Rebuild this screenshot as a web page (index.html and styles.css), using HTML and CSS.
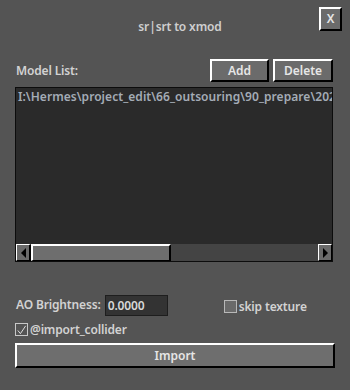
FILE: index.html
```html
<!DOCTYPE html>
<html>
<head>
<meta charset="utf-8">
<link rel="stylesheet" href="styles.css">
</head>
<body>
<div class="app">
  <div class="header">
    <span></span>
    <div class="title">sr|srt to xmod</div>
    <button class="bevel close">X</button>
  </div>
  <div class="toolbar">
    <div class="label">Model List:</div>
    <div class="actions">
      <button class="bevel btn add">Add</button>
      <button class="bevel btn del">Delete</button>
    </div>
  </div>
  <div class="list">
    <div class="items">
      <div class="item">I:\Hermes\project_edit\66_outsouring\90_prepare\2023\model</div>
    </div>
    <div class="hscroll">
      <div class="sbtn left"><span class="tri-l"></span></div>
      <div class="track">
        <div class="thumb"></div>
      </div>
      <div class="sbtn right"><span class="tri-r"></span></div>
    </div>
  </div>
  <div class="opts">
    <div class="ao">
      <span class="label">AO Brightness:</span>
      <div class="input">0.0000</div>
    </div>
    <div class="check skip"><span class="box"></span><span class="label">skip texture</span></div>
  </div>
  <div class="check collider">
    <span class="box checked"><svg width="12" height="12" viewBox="0 0 12 12"><path d="M2 6.5 L4.8 10 L10.5 1.5" fill="none" stroke="#e8e8e8" stroke-width="1"/></svg></span>
    <span class="label">@import_collider</span>
  </div>
  <button class="bevel import">Import</button>
</div>
</body>
</html>
```
FILE: styles.css
```css
* { box-sizing: border-box; }
html, body { margin: 0; padding: 0; }
body {
  width: 350px;
  height: 390px;
  background: #545454;
  font-family: "Noto Sans", "Open Sans", sans-serif;
  font-size: 12px;
  font-weight: 600;
  letter-spacing: -0.15px;
  color: #d2d2d2;
  overflow: hidden;
}
.app {
  display: flex;
  flex-direction: column;
  padding: 7px 17px 0 15px;
}
.header {
  display: grid;
  grid-template-columns: 1fr auto 1fr;
  margin-right: -9px;
  height: 24px;
}
.title {
  margin-top: 12px;
  line-height: 16px;
  color: #cfcfcf;
  padding-left: 3px;
}
button {
  font-family: inherit;
  font-weight: 600;
  font-size: 12px;
  color: #e6e6e6;
  padding: 0;
  margin: 0;
}
.bevel {
  background: #6b6b6b;
  border-style: solid;
  border-width: 2px;
  border-color: #ffffff #000000 #000000 #ffffff;
}
.close {
  justify-self: end;
  width: 23px;
  height: 24px;
  line-height: 18px;
}
.toolbar {
  display: flex;
  justify-content: space-between;
  align-items: center;
  margin-top: 28px;
  height: 23px;
}
.toolbar .label { padding-left: 1px; }
.actions { display: flex; gap: 4px; }
.btn { height: 23px; }
.add { width: 59px; }
.del { width: 60px; }
.list {
  margin-top: 5px;
  height: 175px;
  background: #2a2a2a;
  border: 1px solid #0c0c0c;
  display: flex;
  flex-direction: column;
  overflow: hidden;
}
.items { flex: 1; padding: 1px 0 0 2px; overflow: hidden; }
.item {
  white-space: nowrap;
  color: #a4acb6;
  line-height: 16px;
  letter-spacing: 0.05px;
}
.hscroll {
  height: 17px;
  display: flex;
  background: #444;
}
.sbtn {
  width: 15px;
  background: #6a6a6a;
  display: flex;
  align-items: center;
  justify-content: center;
  border-style: solid;
  border-width: 1px 2px 1px 1px;
  border-color: #fff #000 #000 #fff;
}
.sbtn.right { width: 14px; border-width: 1px 1px 1px 1px; }
.tri-l {
  width: 0; height: 0;
  border-top: 5px solid transparent;
  border-bottom: 5px solid transparent;
  border-right: 5px solid #000;
}
.tri-r {
  width: 0; height: 0;
  border-top: 5px solid transparent;
  border-bottom: 5px solid transparent;
  border-left: 5px solid #000;
}
.track { flex: 1; display: flex; }
.thumb {
  width: 140px;
  background: #6e6e6e;
  border-style: solid;
  border-width: 2px 2px 1px 2px;
  border-color: #fff #000 #000 #fff;
}
.opts {
  margin-top: 33px;
  display: flex;
  align-items: center;
  height: 21px;
}
.ao { display: flex; align-items: center; gap: 4px; }
.ao .label { padding-left: 1px; margin-top: -2px; }
.input {
  width: 63px;
  height: 21px;
  background: #333;
  border: 1px solid #1e1e1e;
  line-height: 19px;
  padding-left: 2px;
  color: #d8d8d8;
}
.check { display: flex; align-items: center; gap: 2px; }
.skip { margin-left: 56px; margin-top: 2px; }
.box {
  width: 13px;
  height: 13px;
  border: 1px solid #b8b8b8;
  background: #6a6a6a;
  display: flex;
  align-items: center;
  justify-content: center;
}
.box.checked { background: #545454; border-color: #c8c8c8; }
.collider { margin-top: 7px; height: 13px; }
.import {
  margin-top: 7px;
  height: 25px;
  width: 320px;
  background: #6e6e6e;
}
```
